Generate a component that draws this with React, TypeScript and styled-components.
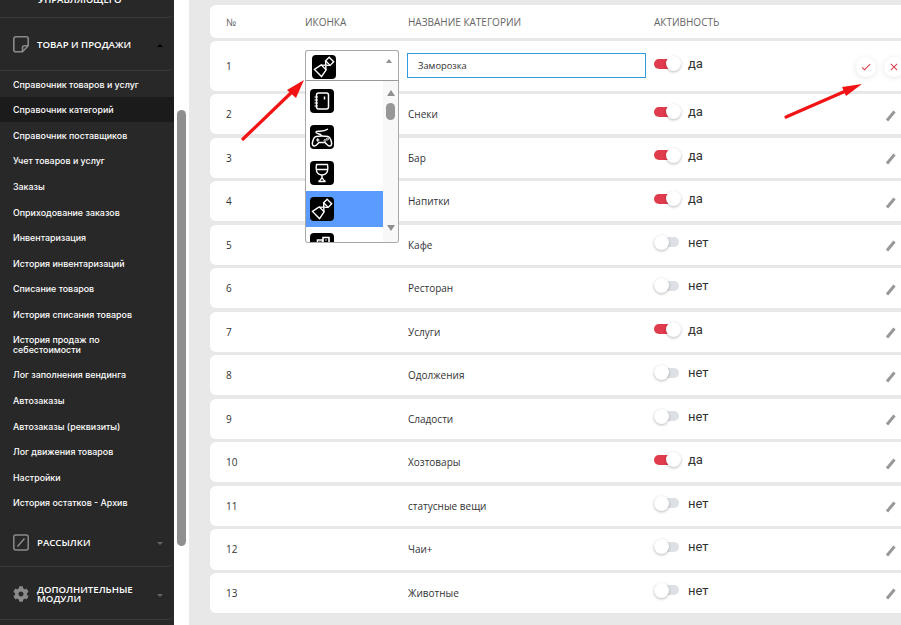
import React from 'react';
import styled, { createGlobalStyle } from 'styled-components';
import { FaCog } from 'react-icons/fa';
import { MdCheck, MdClose } from 'react-icons/md';

const GlobalStyle = createGlobalStyle`
  html, body {
    margin: 0;
    padding: 0;
    width: 901px;
    height: 625px;
    overflow: hidden;
    background: #e8e8e8;
  }
`;

const Page = styled.div`
  position: relative;
  display: flex;
  width: 901px;
  height: 625px;
  overflow: hidden;
`;

const Sidebar = styled.nav`
  width: 174px;
  height: 625px;
  flex: none;
  overflow: hidden;
  background: #282828;
  font-family: 'Open Sans', sans-serif;
  color: #fff;
`;

const ClippedHead = styled.div`
  height: 18px;
  box-sizing: border-box;
  padding-left: 38px;
  font-size: 9.6px;
  font-weight: 600;
  line-height: 0;
  border-bottom: 1px solid #3b3b3b;
  border-bottom-right-radius: 6px;
`;

const SectionHead = styled.div<{ $plain?: boolean; $low?: boolean }>`
  height: ${(p) => (p.$plain ? '51px' : '53px')};
  box-sizing: border-box;
  display: flex;
  align-items: center;
  padding: ${(p) => (p.$low ? '3px' : '0')} 11px 0 13px;
  border-bottom: 1px solid #3b3b3b;
  border-bottom-right-radius: 6px;
  color: #8a8a8a;
`;

const SectionTitle = styled.span`
  flex: 1;
  margin-left: 8px;
  font-size: 9.6px;
  font-weight: 600;
  line-height: 9px;
  color: #fff;
`;

const Caret = styled.i<{ $up?: boolean }>`
  width: 0;
  height: 0;
  margin-top: 3px;
  border-left: 3.5px solid transparent;
  border-right: 3.5px solid transparent;
  ${(p) =>
    p.$up
      ? 'border-bottom: 3.5px solid #000;'
      : 'border-top: 3.5px solid #666;'}
`;

const SubList = styled.ul`
  list-style: none;
  margin: 0;
  padding: 0;
`;

const SubItem = styled.li<{ $active?: boolean; $tall?: boolean }>`
  height: ${(p) => (p.$tall ? '35px' : '25.6px')};
  box-sizing: border-box;
  display: flex;
  align-items: center;
  padding: 1.5px 30px 0 13px;
  font-family: Inter, sans-serif;
  font-size: 8.9px;
  font-weight: 500;
  line-height: 10px;
  background: ${(p) => (p.$active ? '#1b1b1b' : 'transparent')};
`;

const ScrollTrack = styled.div`
  width: 15px;
  height: 625px;
  flex: none;
  box-sizing: border-box;
  padding: 110px 3px 0;
  background: #fff;
`;

const ScrollThumb = styled.div`
  width: 9px;
  height: 436px;
  border-radius: 5px;
  background: #8f8f8f;
`;

const Main = styled.main`
  flex: 1;
  min-width: 0;
  padding: 5px 0 0 21px;
  font-family: 'Open Sans', sans-serif;
  color: #333;
`;

const columns = '79px 103px 246px 1fr';

const HeaderCard = styled.div`
  display: grid;
  grid-template-columns: ${columns};
  align-items: center;
  height: 33px;
  padding-left: 16px;
  margin-bottom: 3px;
  border-radius: 6px 0 0 6px;
  background: #fff;
  font-size: 10px;
  color: #666;
`;

const Row = styled.div<{ $open?: boolean }>`
  display: grid;
  grid-template-columns: ${columns};
  align-items: center;
  height: ${(p) => (p.$open ? '50px' : '40.2px')};
  padding-left: 16px;
  margin-bottom: ${(p) => (p.$open ? '3px' : '3.35px')};
  border-radius: 6px 0 0 6px;
  background: #fff;
  font-size: 10px;
`;

const Cell = styled.span`
  color: #333;
`;

const ActiveCell = styled.div`
  display: flex;
  align-items: center;
  margin-bottom: 5px;
`;

const ToggleTrack = styled.span<{ $on: boolean }>`
  position: relative;
  width: 25px;
  height: 10px;
  border-radius: 5px;
  background: ${(p) => (p.$on ? '#e03c4d' : '#dde0e4')};
`;

const ToggleKnob = styled.span<{ $on: boolean }>`
  position: absolute;
  top: -2.5px;
  left: ${(p) => (p.$on ? '12px' : '0')};
  width: 15px;
  height: 15px;
  border-radius: 50%;
  background: #fff;
  box-shadow: 0 1px 3px rgba(0, 0, 0, 0.28);
`;

const ToggleLabel = styled.span`
  margin-left: 9px;
  font-family: Roboto, sans-serif;
  font-size: 13px;
  color: #333;
`;

const RowEnd = styled.div`
  display: flex;
  align-items: center;
  justify-content: space-between;
`;

const PenBox = styled.span`
  margin: 3px 5px 0 auto;
  display: flex;
`;

const RoundButtons = styled.div`
  display: flex;
  gap: 8px;
  margin: 2px -3px 0 auto;
`;

const RoundButton = styled.span`
  width: 20px;
  height: 20px;
  display: flex;
  align-items: center;
  justify-content: center;
  border-radius: 50%;
  background: #fff;
  color: #e03c4d;
  box-shadow: 0 1px 6px rgba(0, 0, 0, 0.1);
`;

const NameInput = styled.input`
  width: 239px;
  height: 25px;
  box-sizing: border-box;
  margin: 0 0 1px -1px;
  padding: 0 10px;
  border: 1px solid #2f9be0;
  outline: none;
  font-family: 'Open Sans', sans-serif;
  font-size: 9.3px;
  color: #333;
`;

const Select = styled.div`
  position: relative;
  width: 94px;
  height: 31px;
  box-sizing: border-box;
  margin-bottom: 1px;
  padding: 4px 0 0 6px;
  border: 1px solid #a8a8a8;
  border-bottom-color: #9a9a9a;
  border-radius: 3px 3px 0 0;
  background: #fff;
`;

const SelectCaret = styled.i`
  position: absolute;
  top: 8px;
  right: 6px;
  width: 0;
  height: 0;
  border-left: 3px solid transparent;
  border-right: 3px solid transparent;
  border-bottom: 4px solid #8f8f8f;
`;

const DropList = styled.div`
  position: absolute;
  z-index: 2;
  top: 30px;
  left: -1px;
  width: 94px;
  height: 162px;
  box-sizing: border-box;
  display: flex;
  overflow: hidden;
  border: 1px solid #a8a8a8;
  border-top: none;
  border-radius: 0 0 3px 3px;
  background: #fff;
`;

const Options = styled.div`
  width: 77px;
  flex: none;
  padding-top: 1.5px;
`;

const Option = styled.div<{ $selected?: boolean }>`
  height: 36px;
  box-sizing: border-box;
  display: flex;
  align-items: center;
  padding-left: 4px;
  background: ${(p) => (p.$selected ? '#5a9bff' : 'transparent')};
`;

const DropScroll = styled.div`
  flex: 1;
  display: flex;
  flex-direction: column;
  align-items: center;
  padding-top: 9px;
  background: #f8f8f8;
`;

const ScrollUp = styled.i`
  border-left: 4.5px solid transparent;
  border-right: 4.5px solid transparent;
  border-bottom: 6px solid #909090;
`;

const ScrollDown = styled.i`
  margin-top: 105px;
  border-left: 4.5px solid transparent;
  border-right: 4.5px solid transparent;
  border-top: 6px solid #909090;
`;

const DropThumb = styled.div`
  width: 9px;
  height: 17px;
  margin-top: 7px;
  border-radius: 5px;
  background: #979797;
`;

const ArrowLayer = styled.svg`
  position: absolute;
  z-index: 3;
  inset: 0;
  pointer-events: none;
`;

const Tile: React.FC<{ children: React.ReactNode }> = ({ children }) => (
  <svg width="24" height="24" viewBox="0 0 24 24" fill="none" stroke="#fff" strokeWidth="1.2" style={{ display: 'block' }}>
    <rect width="24" height="24" rx="4" fill="#000" stroke="none" />
    {children}
  </svg>
);

const BandageIcon = () => (
  <Tile>
    <g transform="rotate(45 12 12)" strokeWidth="1.400">
      <rect x="8.800" y="1.500" width="6.400" height="5" />
      <path d="M8.800 6.500l6.400 6M15.200 6.500l-6.400 6" />
      <path d="M8.500 12.500h7l1.500 8h-10z" />
    </g>
  </Tile>
);

const NotebookIcon = () => (
  <Tile>
    <rect x="6.500" y="4" width="12" height="16" rx="2" strokeWidth="1.500" />
    <path d="M4.500 8h3.500M4.500 11h3.500M4.500 14h3.500M4.500 17h3.500" strokeWidth="1.200" />
    <path d="M14.500 7.500v3" strokeWidth="1.500" />
  </Tile>
);

const GamepadIcon = () => (
  <Tile>
    <path d="M6 11.500c-2.500.5-4 6-3.500 8 .5 2 2.500 1.800 4 .5l2.500-2.500h6l2.500 2.500c1.500 1.300 3.500 1.500 4-.5.500-2-1-7.500-3.500-8-2.500-.6-10-.6-12 0z" strokeWidth="1.500" />
    <path d="M6 15h3.500M7.750 13.250v3.500" strokeWidth="1.200" />
    <circle cx="15" cy="15.500" r="1" strokeWidth=".9" />
    <circle cx="17.500" cy="14" r="1" strokeWidth=".9" />
    <path d="M11.500 11c0-2.500-6-2-5.500-4 .5-2 6.500 1 12-3" strokeWidth="1.400" />
  </Tile>
);

const GlassIcon = () => (
  <Tile>
    <path d="M6.500 3.500h11c1 5 .5 10-5.500 10.500-6-.5-6.500-5.500-5.500-10.500z" strokeWidth="1.400" />
    <path d="M6 8.500h12" strokeWidth="1.400" />
    <path d="M12 14v2.500M8.500 20.500c2-1 2.500-2 3.500-4 1 2 1.500 3 3.500 4z" strokeWidth="1.400" />
  </Tile>
);

const BlocksIcon = () => (
  <Tile>
    <path d="M7.500 12V7h5v5M13 12V4.500h6V12M3 24v-12h18v12" strokeWidth="1.600" />
    <path d="M15.500 7h1M9.500 9h1" strokeWidth="1.500" />
    <path d="M3 16h18" strokeWidth="1.600" />
  </Tile>
);

const NoteIcon = () => (
  <svg width="16" height="17" viewBox="0 0 16 17" fill="none" stroke="currentColor" strokeWidth="1.600">
    <path d="M9.500 15.800H2.800a2 2 0 0 1-2-2V2.800a2 2 0 0 1 2-2h10.400a2 2 0 0 1 2 2v7z" />
    <path d="M9.500 15.800v-4a2 2 0 0 1 2-2h3.700" />
  </svg>
);

const SlashSquareIcon = () => (
  <svg width="16" height="17" viewBox="0 0 16 17" fill="none" stroke="currentColor" strokeWidth="1.500">
    <rect x=".8" y="1" width="14.400" height="15" rx="2" />
    <path d="M4.500 12.500l7-8" />
  </svg>
);

const PenIcon = () => (
  <svg width="11" height="12" viewBox="0 0 11 12" fill="none" stroke="#989898">
    <path d="M2 10.500L9.500 1.500" strokeWidth="3" />
  </svg>
);

const items = [
  { title: 'Справочник товаров и услуг' },
  { title: 'Справочник категорий', active: true },
  { title: 'Справочник поставщиков' },
  { title: 'Учет товаров и услуг' },
  { title: 'Заказы' },
  { title: 'Оприходование заказов' },
  { title: 'Инвентаризация' },
  { title: 'История инвентаризаций' },
  { title: 'Списание товаров' },
  { title: 'История списания товаров' },
  { title: 'История продаж по себестоимости', tall: true },
  { title: 'Лог заполнения вендинга' },
  { title: 'Автозаказы' },
  { title: 'Автозаказы (реквизиты)' },
  { title: 'Лог движения товаров' },
  { title: 'Настройки' },
  { title: 'История остатков - Архив' },
];

const categories = [
  { name: 'Снеки', on: true },
  { name: 'Бар', on: true },
  { name: 'Напитки', on: true },
  { name: 'Кафе', on: false },
  { name: 'Ресторан', on: false },
  { name: 'Услуги', on: true },
  { name: 'Одолжения', on: false },
  { name: 'Сладости', on: false },
  { name: 'Хозтовары', on: true },
  { name: 'статусные вещи', on: false },
  { name: 'Чаи+', on: false },
  { name: 'Животные', on: false },
];

const Toggle: React.FC<{ on: boolean }> = ({ on }) => (
  <ActiveCell>
    <ToggleTrack $on={on}>
      <ToggleKnob $on={on} />
    </ToggleTrack>
    <ToggleLabel>{on ? 'да' : 'нет'}</ToggleLabel>
  </ActiveCell>
);

const App: React.FC = () => {
  return (
    <Page>
      <GlobalStyle />
      <Sidebar>
        <ClippedHead>УПРАВЛЯЮЩЕГО</ClippedHead>
        <SectionHead>
          <NoteIcon />
          <SectionTitle>ТОВАР И ПРОДАЖИ</SectionTitle>
          <Caret $up />
        </SectionHead>
        <SubList>
          {items.map((item) => (
            <SubItem key={item.title} $active={item.active} $tall={item.tall}>
              {item.title}
            </SubItem>
          ))}
        </SubList>
        <SectionHead $plain $low>
          <SlashSquareIcon />
          <SectionTitle>РАССЫЛКИ</SectionTitle>
          <Caret />
        </SectionHead>
        <SectionHead $low>
          <FaCog size={16} />
          <SectionTitle>ДОПОЛНИТЕЛЬНЫЕ МОДУЛИ</SectionTitle>
          <Caret />
        </SectionHead>
      </Sidebar>
      <ScrollTrack>
        <ScrollThumb />
      </ScrollTrack>
      <Main>
        <HeaderCard>
          <span>№</span>
          <span>ИКОНКА</span>
          <span>НАЗВАНИЕ КАТЕГОРИИ</span>
          <span>АКТИВНОСТЬ</span>
        </HeaderCard>
        <Row $open>
          <Cell>1</Cell>
          <Select>
            <BandageIcon />
            <SelectCaret />
            <DropList>
              <Options>
                <Option><NotebookIcon /></Option>
                <Option><GamepadIcon /></Option>
                <Option><GlassIcon /></Option>
                <Option $selected><BandageIcon /></Option>
                <Option><BlocksIcon /></Option>
              </Options>
              <DropScroll>
                <ScrollUp />
                <DropThumb />
                <ScrollDown />
              </DropScroll>
            </DropList>
          </Select>
          <NameInput defaultValue="Заморозка" />
          <RowEnd>
            <Toggle on />
            <RoundButtons>
              <RoundButton><MdCheck size={12} /></RoundButton>
              <RoundButton><MdClose size={12} /></RoundButton>
            </RoundButtons>
          </RowEnd>
        </Row>
        {categories.map((category, index) => (
          <Row key={category.name}>
            <Cell>{index + 2}</Cell>
            <span />
            <Cell>{category.name}</Cell>
            <RowEnd>
              <Toggle on={category.on} />
              <PenBox><PenIcon /></PenBox>
            </RowEnd>
          </Row>
        ))}
      </Main>
      <ArrowLayer width="901" height="625" viewBox="0 0 901 625">
        <path d="M243 139L294 90" stroke="#f21414" strokeWidth="3.200" strokeLinecap="round" />
        <path d="M304 80L287 90L296 98z" fill="#f21414" />
        <path d="M786 117L848 90" stroke="#f21414" strokeWidth="3.200" strokeLinecap="round" />
        <path d="M862 84L842 87L846 96z" fill="#f21414" />
      </ArrowLayer>
    </Page>
  );
};

export default App;
